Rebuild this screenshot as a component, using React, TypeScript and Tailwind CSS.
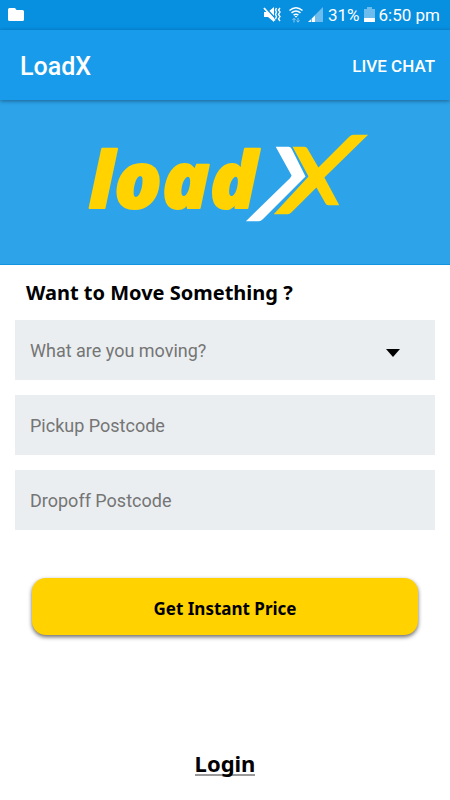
import type { ReactNode } from "react";

const items = ["Furniture", "House move", "Car", "Motorbike", "Pallets", "Other"];

function StatusIcons() {
  return (
    <svg width="60" height="18" viewBox="0 0 60 18" aria-hidden="true">
      {/* muted speaker with vibration marks */}
      <path d="M1 6h4l6-5v15l-6-5H1z" fill="#fff" />
      <path d="M2 1l10 11" stroke="#078fe0" strokeWidth="1.500" />
      <path d="M1 2l11 12.500" stroke="#fff" strokeWidth="1.800" />
      <g fill="none" stroke="#fff" strokeWidth="1.400">
        <path d="M13.500 2l-1 2 1 2-1 2.500 1 2-1 2.500" />
        <path d="M17 2l-1.500 2 1.500 2-1.500 2.500 1.500 2-1.500 2.500 1.500 2" />
      </g>
      {/* wifi */}
      <g fill="none" stroke="#fff" strokeWidth="1.500">
        <path d="M26.500 4.500q6.500-5.500 13 0" />
        <path d="M28.500 6.900q4.500-3.800 9 0" />
        <path d="M30.600 9.200q2.400-1.800 4.800 0" />
      </g>
      <path d="M31.500 10h3L33 11.800z" fill="#fff" />
      <path
        d="M31 16.500v-4m-1.500 1.500l1.500-1.700 1.500 1.700M35 12v4m-1.500-1.500l1.500 1.700 1.500-1.700"
        fill="none"
        stroke="#8fcbf2"
        strokeWidth="1"
      />
      {/* signal */}
      <path d="M45 16L60 1v15z" fill="#6dbcee" />
      <path d="M45 16l3-2.500V16zM49 12.500l3-3V16h-3z" fill="#fff" />
    </svg>
  );
}

function StatusBar() {
  return (
    <div className="flex h-[30px] items-center justify-between bg-[#078fe0] pr-[10px] pl-2 text-[17px] leading-[30px] text-white">
      <svg width="16" height="14" viewBox="0 0 16 14" fill="#fff" aria-hidden="true">
        <path d="M1.500 0h5.500l1.500 2h6q1.500 0 1.500 1.500v8q0 1.500-1.500 1.500h-13Q0 13 0 11.500v-10Q0 0 1.500 0z" />
      </svg>
      <div className="flex items-center">
        <StatusIcons />
        <span className="ml-[5px]">31%</span>
        <svg className="mx-1" width="11" height="16" viewBox="0 0 11 16" aria-hidden="true">
          <path d="M3 0h5v2h3v9H0V2h3z" fill="#6dbcee" />
          <path d="M0 11h11v4H0z" fill="#fff" />
        </svg>
        <span>6:50 pm</span>
      </div>
    </div>
  );
}

function Logo() {
  return (
    <svg className="h-full w-[290px]" viewBox="-4 -35 290 165" role="img" aria-label="loadX">
      <text
        x="4"
        y="74"
        fill="#ffd200"
        stroke="#ffd200"
        strokeWidth="2"
        strokeLinejoin="round"
        className="font-['Open_Sans'] text-[79px] font-extrabold italic"
      >
        load
      </text>
      <path d="M192 12h13q2 0 3 2l14 28-43 43q-2 2-4 2h-13l42-41q3-2 4-5z" fill="#fff" />
      <path
        d="M209 12h12q2 0 3 2l11 19 31-31q2-2 4-2h15l-44 43 15 28h-11q-2 0-3-2l-9-16-25 25q-2 2-4 2h-14l35-38z"
        fill="#ffd200"
      />
    </svg>
  );
}

function Field({ children }: { children: ReactNode }) {
  return <div className="relative h-[60px] bg-[#eaeef1]">{children}</div>;
}

const control =
  "block h-full w-full appearance-none bg-transparent px-[15px] text-[18px] text-[#757575] outline-none placeholder:text-[#757575]";

export default function App() {
  return (
    <div className="flex min-h-screen flex-col bg-white font-['Roboto','Liberation_Sans',sans-serif]">
      <StatusBar />
      <header className="relative flex h-[70px] items-center justify-between bg-[#179bea] pt-[3px] pr-[15px] pl-5 text-white shadow-[0_1px_4px_rgba(0,0,0,0.4)]">
        <h1 className="text-[25px] font-medium">LoadX</h1>
        <button type="button" className="text-[17px] font-medium">
          LIVE CHAT
        </button>
      </header>

      <div className="flex h-[165px] justify-center border-b border-[#1593df] bg-[#2da3ea]">
        <Logo />
      </div>

      <main className="flex grow flex-col px-[15px]">
        <h2 className="mt-[14px] pl-[11px] font-['Noto_Sans'] text-[20px] leading-[28px] font-bold text-black">
          Want to Move Something ?
        </h2>

        <form className="mt-[13px] flex flex-col gap-[15px]" onSubmit={(e) => e.preventDefault()}>
          <Field>
            <select aria-label="What are you moving?" defaultValue="" className={control}>
              <option value="">What are you moving?</option>
              {items.map((item) => (
                <option key={item}>{item}</option>
              ))}
            </select>
            <svg
              className="pointer-events-none absolute top-[29px] right-[35px]"
              width="14"
              height="8"
              viewBox="0 0 14 8"
              aria-hidden="true"
            >
              <path d="M0 0h14L7 8z" />
            </svg>
          </Field>
          <Field>
            <input aria-label="Pickup Postcode" placeholder="Pickup Postcode" className={control} />
          </Field>
          <Field>
            <input aria-label="Dropoff Postcode" placeholder="Dropoff Postcode" className={control} />
          </Field>
          <button
            type="submit"
            className="mx-[17px] mt-[33px] h-[57px] rounded-[14px] bg-[#ffd200] pt-1 font-['Noto_Sans'] text-[17px] font-bold text-black shadow-[0_2px_4px_rgba(0,0,0,0.6)]"
          >
            Get Instant Price
          </button>
        </form>

        <a
          href="#login"
          className="mx-auto mt-auto mb-6 border-b-2 border-[#999] font-['Noto_Sans'] text-[22px] leading-[22px] font-bold text-black"
        >
          Login
        </a>
      </main>
    </div>
  );
}
